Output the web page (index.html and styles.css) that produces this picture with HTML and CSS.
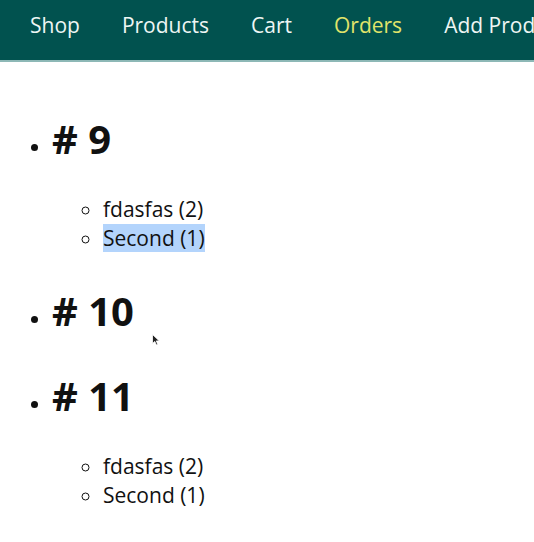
FILE: index.html
```html
<!DOCTYPE html>
<html lang="en">
<head>
<meta charset="utf-8">
<title>Orders</title>
<link rel="stylesheet" href="styles.css">
</head>
<body>
<header class="main-header">
  <nav class="main-header__nav">
    <ul class="main-header__item-list">
      <li class="main-header__item"><a href="#">Shop</a></li>
      <li class="main-header__item"><a href="#">Products</a></li>
      <li class="main-header__item"><a href="#">Cart</a></li>
      <li class="main-header__item"><a class="active" href="#">Orders</a></li>
      <li class="main-header__item"><a href="#">Add Product</a></li>
    </ul>
  </nav>
</header>
<main class="content">
  <ul class="orders">
    <li class="orders__item">
      <h1 class="orders__title"># 9</h1>
      <ul class="orders__products">
        <li class="orders__products-item">fdasfas (2)</li>
        <li class="orders__products-item"><span class="selected">Second (1)</span></li>
      </ul>
    </li>
    <li class="orders__item">
      <h1 class="orders__title"># 10</h1>
    </li>
    <li class="orders__item">
      <h1 class="orders__title"># 11</h1>
      <ul class="orders__products">
        <li class="orders__products-item">fdasfas (2)</li>
        <li class="orders__products-item">Second (1)</li>
      </ul>
    </li>
  </ul>
  <svg class="cursor" width="8" height="12" viewBox="0 0 8 12" aria-hidden="true">
    <path d="M0.5 0.5 L0.5 9.5 L2.8 7.4 L4.4 11 L5.8 10.4 L4.3 6.9 L7.3 6.9 Z" fill="#222" stroke="#fff" stroke-width="0.8"/>
  </svg>
</main>
</body>
</html>
```

FILE: styles.css
```css
* {
  box-sizing: border-box;
}

html, body {
  margin: 0;
  padding: 0;
  background: #ffffff;
  font-family: "Open Sans", "DejaVu Sans", sans-serif;
  color: #111111;
}

.main-header {
  height: 62px;
  background: #01524f;
  border-bottom: 2px solid #8db8b6;
  overflow: hidden;
}

.main-header__nav {
  height: 100%;
}

.main-header__item-list {
  list-style: none;
  margin: 0;
  padding: 11px 0 0 30px;
  display: flex;
  gap: 42px;
  white-space: nowrap;
}

.main-header__item a {
  font-size: 21px;
  color: #eef6f4;
  text-decoration: none;
}

.main-header__item a.active {
  color: #e0e46a;
}

.content {
  position: relative;
  padding-top: 19px;
}

.orders {
  margin: 0;
  padding-left: 52px;
  font-size: 21px;
}

.orders__title {
  font-size: 40px;
  font-weight: 700;
  margin: 29.7px 0;
}

.orders__products {
  margin: 0;
  padding-left: 51px;
  list-style: circle;
  line-height: 29px;
}

.selected {
  background: #b3d4fc;
}

.cursor {
  position: absolute;
  left: 152px;
  top: 272px;
}
```
